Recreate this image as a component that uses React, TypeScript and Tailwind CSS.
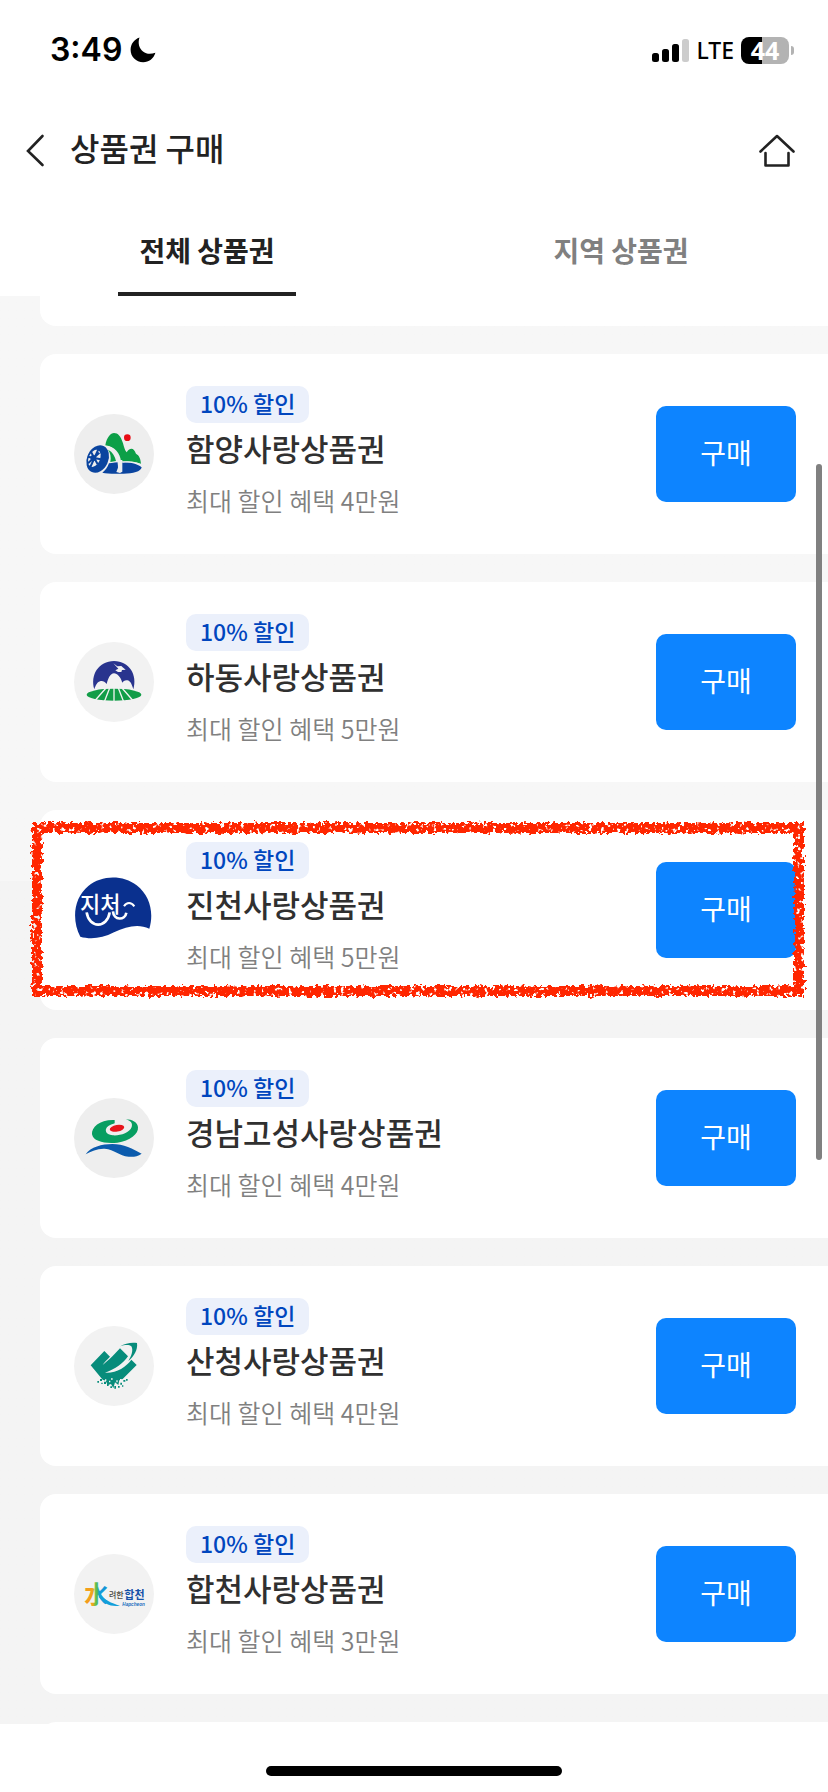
import React from "react";

type Voucher = {
  name: string;
  benefit: string;
  logo: React.ReactNode;
  highlighted?: boolean;
};

const LOGO = "size-20 shrink-0";

function HamyangLogo() {
  return (
    <svg viewBox="42 42 240 240" className={LOGO} aria-hidden="true">
      <circle cx="162" cy="162" r="120" fill="#eeeeee" />
      <path d="M136 136C140 112 152 99 162 99C174 99 182 108 189 130C192 142 195 152 200 157C205 148 210 146 214 146C220 146 224 151 228 161C232 164 237 167 238 172C242 179 242 186 243 191C220 184 195 183 183 184C180 160 165 140 136 136Z" fill="#0c9f47" />
      <path d="M144 149C158 155 166 172 168 183L151 186C154 172 151 158 144 149Z" fill="#0c9f47" />
      <circle cx="202" cy="113" r="10" fill="#e90c14" />
      <path d="M147 190C175 185 225 184 245 202C243 216 215 222 184 221C160 222 140 221 127 218C136 211 142 203 147 190Z" fill="#0a449f" />
      <ellipse cx="113" cy="177" rx="32" ry="43" transform="rotate(24 113 177)" fill="#0a449f" />
      <ellipse cx="103" cy="175" rx="17" ry="27" transform="rotate(24 103 175)" fill="#eeeeee" />
      <g stroke="#0a449f" strokeWidth="6">
        <path d="M115 148L91 201M83 170L122 178M92 154L113 193M118 158L84 190" />
      </g>
      <circle cx="100" cy="174" r="9" fill="#0a449f" />
      <path d="M144 142C170 150 179 178 178 212" fill="none" stroke="#eeeeee" strokeWidth="8" />
      <path d="M176 180L187 180L187 215L180 219L169 216L174 203Z" fill="#eeeeee" />
      <path d="M187 187C210 184 230 186 245 196" fill="none" stroke="#eeeeee" strokeWidth="3" />
    </svg>
  );
}

function HadongLogo() {
  return (
    <svg viewBox="42 36 240 240" className={LOGO} aria-hidden="true">
      <circle cx="162" cy="156" r="120" fill="#f2f2f2" />
      <path d="M103 178C90 135 116 93 162 93C208 93 233 135 220 178C216 164 211 152 202 151C194 150 190 154 187 158C182 142 172 130 162 130C151 130 144 146 140 162C135 154 128 152 122 153C112 155 107 166 103 178Z" fill="#29348e" />
      <path d="M160 100L172 109L184 108L188 112L197 119L186 120L184 126L174 126L166 121L175 116Z" fill="#f2f2f2" />
      <ellipse cx="162" cy="194" rx="82" ry="18" fill="#129d48" />
      <g stroke="#f2f2f2" strokeWidth="4">
        <path d="M162 174V215M149 174L133 215M138 174L104 213M175 174L191 215M186 174L220 213" />
      </g>
    </svg>
  );
}

function JincheonLogo() {
  return (
    <svg viewBox="162 210 240 240" className={LOGO} aria-hidden="true">
      <path d="M181 410C155 360 160 295 205 258C245 224 310 224 350 256C391 288 402 340 388 386C355 371 320 379 282 397C245 416 210 418 181 410Z" fill="#0a308e" />
      <text x="180" y="336" fontSize="66" fontWeight="500" fill="#ffffff" fontFamily="'Noto Sans CJK KR', sans-serif">
        지처
      </text>
      <g fill="none" stroke="#ffffff" strokeWidth="8">
        <path d="M200 337C207 386 262 386 269 337" />
        <path d="M279 334C281 362 315 362 319 338" />
        <path d="M312 319C320 306 334 306 343 319" strokeWidth="6" />
      </g>
    </svg>
  );
}

function GoseongLogo() {
  return (
    <svg viewBox="42 39 240 240" className={LOGO} aria-hidden="true">
      <circle cx="162" cy="159" r="120" fill="#eeeeee" />
      <path d="M164 105C120 103 94 126 96 148C99 170 138 177 172 173C210 168 236 147 234 127C233 112 217 103 197 103C211 107 219 114 215 126C209 144 179 153 158 151C135 149 132 132 145 123C152 118 160 117 164 115Z" fill="#079e61" />
      <ellipse cx="171" cy="130" rx="22" ry="10" transform="rotate(-10 171 130)" fill="#e7141b" />
      <path d="M77 208C92 186 126 177 157 177C190 177 220 192 245 206C232 214 220 217 206 215C177 213 164 193 134 191C113 190 94 198 77 208Z" fill="#0b5bad" />
    </svg>
  );
}

function SancheongLogo() {
  return (
    <svg viewBox="42 48 240 240" className={LOGO} aria-hidden="true">
      <circle cx="162" cy="168" r="120" fill="#f2f2f2" />
      <path d="M92 166L133 123L150 140C141 149 133 157 128 165C140 154 155 143 163 133L180 115L204 139C190 160 166 178 135 188C170 190 197 172 214 149L230 165L188 207L178 211L175 225L165 217L160 235L153 222L143 225L137 212L128 209Z" fill="#078c7b" />
      <path d="M181 109C195 99 217 96 231 99C234 119 222 139 205 153C214 139 221 120 214 109C208 103 193 104 181 109Z" fill="#078c7b" />
      <g fill="#078c7b">
        <path d="M112 213h5v5h-5zM120 207h6v6h-6zM124 218h4v4h-4zM132 215h6v7h-6zM141 222h5v6h-5zM151 229h5v5h-5zM163 228h5v8h-5zM174 228h5v5h-5zM181 218h5v6h-5zM190 210h6v5h-6zM198 207h5v5h-5zM186 226h4v4h-4z" />
      </g>
      <path d="M135 208h4v5h-4zM147 212h4v5h-4zM153 205h5v4h-5zM169 211h4v6h-4zM180 207h5v4h-5z" fill="#f2f2f2" />
    </svg>
  );
}

function HapcheonLogo() {
  return (
    <svg viewBox="42 42 240 240" className={LOGO} aria-hidden="true">
      <defs>
        <linearGradient id="water" x1="0" x2="1" y1="0" y2="0">
          <stop offset="0" stopColor="#f59a1b" />
          <stop offset="0.36" stopColor="#f2a51c" />
          <stop offset="0.44" stopColor="#7cc142" />
          <stop offset="0.54" stopColor="#4fb85a" />
          <stop offset="0.62" stopColor="#129fda" />
          <stop offset="1" stopColor="#1590d5" />
        </linearGradient>
      </defs>
      <circle cx="162" cy="162" r="120" fill="#f2f2f2" />
      <text x="73" y="188" fontSize="72" fontWeight="700" fill="url(#water)" fontFamily="'Noto Sans CJK KR', sans-serif">
        水
      </text>
      <path d="M117 160C134 180 153 190 180 197C155 202 132 192 117 172Z" fill="#129fda" />
      <text x="147" y="174" fontSize="24" fontWeight="500" fill="#4a4a40" fontFamily="'Noto Sans CJK KR', sans-serif">
        려한
      </text>
      <text x="193" y="177" fontSize="33" fontWeight="700" fill="#1551a8" fontFamily="'Noto Sans CJK KR', sans-serif">
        합천
      </text>
      <text x="187" y="199" fontSize="14" fontWeight="700" fontStyle="italic" fill="#1b6fc0" fontFamily="'Liberation Sans', sans-serif">
        Hapcheon
      </text>
    </svg>
  );
}

const vouchers: Voucher[] = [
  { name: "함양사랑상품권", benefit: "최대 할인 혜택 4만원", logo: <HamyangLogo /> },
  { name: "하동사랑상품권", benefit: "최대 할인 혜택 5만원", logo: <HadongLogo /> },
  { name: "진천사랑상품권", benefit: "최대 할인 혜택 5만원", logo: <JincheonLogo />, highlighted: true },
  { name: "경남고성사랑상품권", benefit: "최대 할인 혜택 4만원", logo: <GoseongLogo /> },
  { name: "산청사랑상품권", benefit: "최대 할인 혜택 4만원", logo: <SancheongLogo /> },
  { name: "합천사랑상품권", benefit: "최대 할인 혜택 3만원", logo: <HapcheonLogo /> },
];

function StatusBar() {
  return (
    <div className="flex h-[100px] items-center justify-between pr-[34px] pl-[50px] text-black">
      <div className="flex items-center gap-2">
        <span className="font-['Inter',sans-serif] text-[32px] leading-10 font-semibold">3:49</span>
        <svg viewBox="0 0 26 26" className="size-[26px]" aria-hidden="true">
          <path d="M9.5 0.6C7.6 6.2 9.2 11.6 13 14.6C16.6 17.4 21 17.4 25.4 15.7C23.7 21.5 18.9 25.2 13.2 25.2C6 25.2 0.6 19.8 0.6 12.8C0.6 7.2 4.2 2.4 9.5 0.6Z" />
        </svg>
      </div>
      <div className="flex items-center gap-[7px]">
        <svg viewBox="0 0 37 23" className="h-[23px] w-[37px]" aria-hidden="true">
          <rect x="0" y="14" width="7" height="9" rx="2.5" />
          <rect x="10" y="10" width="7" height="13" rx="2.5" />
          <rect x="20" y="5" width="7" height="18" rx="2.5" />
          <rect x="30" y="0" width="7" height="23" rx="2.5" fill="#cccccc" />
        </svg>
        <span className="font-['Noto_Sans',sans-serif] text-[23px] leading-8 font-medium">LTE</span>
        <div className="flex items-center gap-[2px]">
          <div className="flex h-[27px] w-12 items-center justify-center rounded-lg bg-linear-to-r from-black from-44% to-[#b3b3b3] to-44%">
            <span className="font-['Noto_Sans',sans-serif] text-[25px] leading-7 font-bold text-white">44</span>
          </div>
          <div className="h-[9px] w-[3px] rounded-r-full bg-[#b3b3b3]" />
        </div>
      </div>
    </div>
  );
}

function RoughFrame() {
  return (
    <svg className="pointer-events-none absolute inset-y-0 right-4 -left-4 h-full w-[calc(100%-4px)]" aria-hidden="true">
      <defs>
        <filter id="crayon" x="-5%" y="-10%" width="110%" height="120%">
          <feTurbulence type="fractalNoise" baseFrequency="0.25" numOctaves="2" seed="4" result="noise" />
          <feDisplacementMap in="SourceGraphic" in2="noise" scale="9" xChannelSelector="R" yChannelSelector="G" result="edge" />
          <feComponentTransfer in="noise" result="grain">
            <feFuncA type="linear" slope="9" intercept="-2.5" />
          </feComponentTransfer>
          <feComposite in="edge" in2="grain" operator="in" />
        </filter>
      </defs>
      <svg x="13" y="18" width="100%" height="163" overflow="visible">
        <g filter="url(#crayon)">
          <rect x="0" y="0" width="762" height="163" fill="none" stroke="#ff2600" strokeWidth="10" />
        </g>
      </svg>
    </svg>
  );
}

function VoucherCard({ voucher }: { voucher: Voucher }) {
  return (
    <li className="relative flex h-[200px] items-center rounded-l-2xl bg-white pr-8 pl-[34px]">
      {voucher.logo}
      <div className="ml-8 flex flex-1 flex-col items-start self-start pt-8">
        <span className="rounded-[10px] bg-[#ebf0fb] px-[14px] pb-[2px] text-[23px] leading-[35px] font-medium text-[#0046be]">
          10% 할인
        </span>
        <h2 className="mt-[3px] text-[31px] leading-[44px] font-medium text-[#303030]">{voucher.name}</h2>
        <p className="mt-3 text-[25px] leading-9 font-[350] text-[#808080]">{voucher.benefit}</p>
      </div>
      <button type="button" className="h-24 w-[140px] rounded-[10px] bg-[#0d84ff] pb-1 text-[28px] text-white">
        구매
      </button>
      {voucher.highlighted && <RoughFrame />}
    </li>
  );
}

export default function App() {
  return (
    <div className="relative flex min-h-screen flex-col overflow-hidden bg-white font-['Noto_Sans_CJK_KR',sans-serif] text-[#222222]">
      <header>
        <StatusBar />
        <div className="flex h-[100px] items-center pr-8 pl-6">
          <button type="button" aria-label="뒤로" className="mr-6">
            <svg viewBox="0 0 22 34" className="h-[34px] w-[22px]" fill="none" stroke="#222222" strokeWidth="2.6" strokeLinecap="round" aria-hidden="true">
              <path d="M18.5 3L4 18L18.5 32" />
            </svg>
          </button>
          <h1 className="flex-1 pb-[6px] text-[32px] leading-10 font-medium">상품권 구매</h1>
          <a href="#home" aria-label="홈">
            <svg viewBox="0 0 38 34" className="h-[34px] w-[38px]" fill="none" stroke="#222222" strokeWidth="2.6" strokeLinecap="round" strokeLinejoin="round" aria-hidden="true">
              <path d="M2.5 18.5L19 3L35.5 18.5" />
              <path d="M7.5 20V32.5H30.5V20" />
            </svg>
          </a>
        </div>
        <nav className="grid h-24 grid-cols-2" role="tablist">
          <button type="button" role="tab" aria-selected="true" className="mx-auto w-[178px] border-b-4 border-[#222222] pt-2 text-[28px] font-bold">
            전체 상품권
          </button>
          <button type="button" role="tab" aria-selected="false" className="mx-auto w-[178px] border-b-4 border-transparent pt-2 text-[28px] font-bold text-[#808080]">
            지역 상품권
          </button>
        </nav>
      </header>

      <main className="flex-1 bg-linear-to-b from-[#f7f7f7] from-41% to-[#f4f4f4] to-41% pl-10">
        <div className="h-[30px] rounded-bl-2xl bg-white" />
        <ul className="my-7 flex flex-col gap-7">
          {vouchers.map((voucher) => (
            <VoucherCard key={voucher.name} voucher={voucher} />
          ))}
        </ul>
        <div className="h-[2px] overflow-hidden">
          <div className="h-8 rounded-tl-2xl bg-white" />
        </div>
      </main>

      <footer className="flex h-[68px] items-end justify-center pb-4">
        <div className="h-[10px] w-[296px] rounded-full bg-black" />
      </footer>

      <div className="absolute top-[464px] right-[6px] h-[696px] w-[6px] rounded-full bg-[#808080]" />
    </div>
  );
}
